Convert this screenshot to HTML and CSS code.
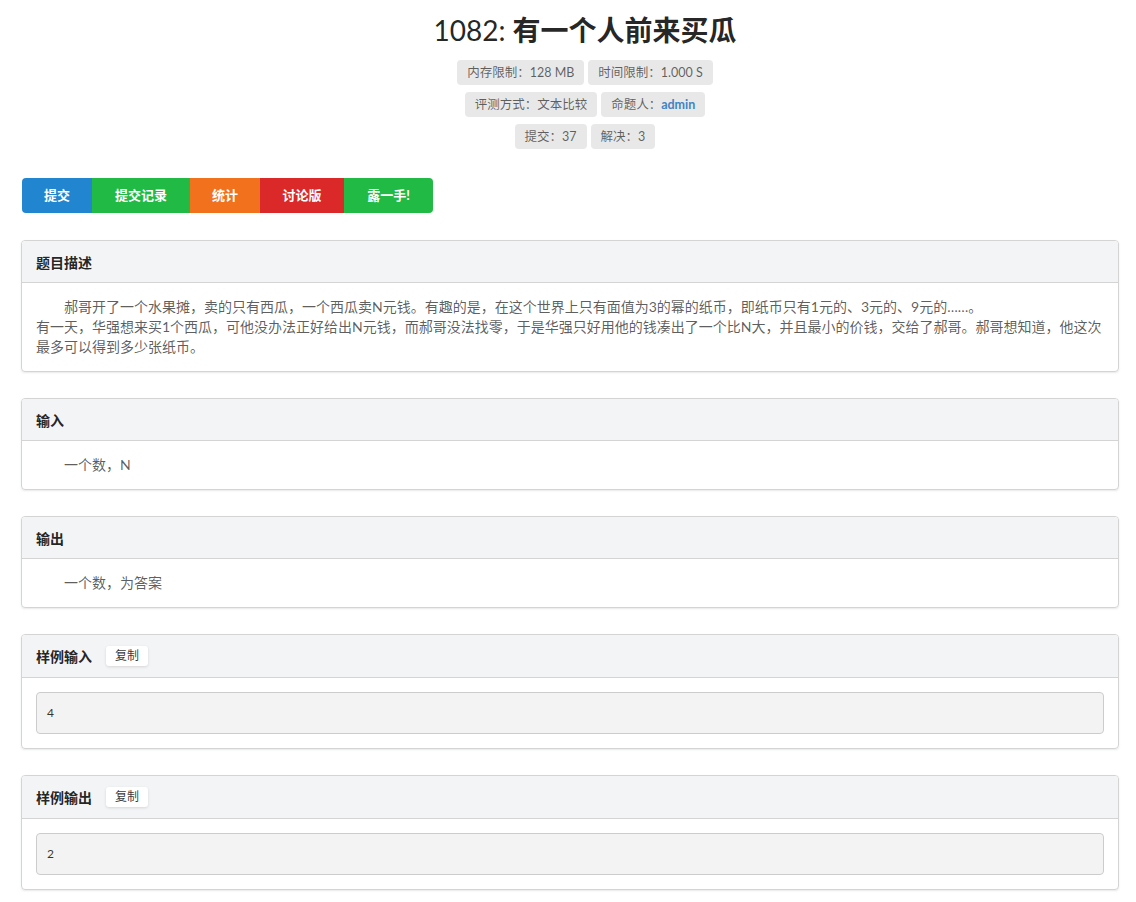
FILE: index.html
```html
<!DOCTYPE html>
<html lang="zh-CN">
<head>
<meta charset="utf-8">
<title>1082: 有一个人前来买瓜</title>
<link rel="stylesheet" href="styles.css">
</head>
<body>
<div class="page">
  <div class="head">
    <h1 class="title"><span class="num">1082: </span>有一个人前来买瓜</h1>
    <div class="labels first">
      <span class="label">内存限制：128 MB</span>
      <span class="label">时间限制：1.000 S</span>
    </div>
    <div class="labels">
      <span class="label">评测方式：文本比较</span>
      <span class="label">命题人：<a class="link" href="#">admin</a></span>
    </div>
    <div class="labels">
      <span class="label">提交：37</span>
      <span class="label">解决：3</span>
    </div>
  </div>

  <div class="buttons">
    <a class="btn blue" href="#">提交</a>
    <a class="btn green w98" href="#">提交记录</a>
    <a class="btn orange" href="#">统计</a>
    <a class="btn red w84" href="#">讨论版</a>
    <a class="btn green w89" href="#">露一手!</a>
  </div>

  <div class="panel">
    <div class="panel-head">题目描述</div>
    <div class="panel-body">
      <p class="indent">郝哥开了一个水果摊，卖的只有西瓜，一个西瓜卖N元钱。有趣的是，在这个世界上只有面值为3的幂的纸币，即纸币只有1元的、3元的、9元的……。</p>
      <p>有一天，华强想来买1个西瓜，可他没办法正好给出N元钱，而郝哥没法找零，于是华强只好用他的钱凑出了一个比N大，并且最小的价钱，交给了郝哥。郝哥想知道，他这次最多可以得到多少张纸币。</p>
    </div>
  </div>

  <div class="panel">
    <div class="panel-head">输入</div>
    <div class="panel-body"><p class="indent">一个数，N</p></div>
  </div>

  <div class="panel">
    <div class="panel-head">输出</div>
    <div class="panel-body"><p class="indent">一个数，为答案</p></div>
  </div>

  <div class="panel">
    <div class="panel-head tall">样例输入<span class="copy">复制</span></div>
    <div class="panel-body"><pre class="sample">4</pre></div>
  </div>

  <div class="panel">
    <div class="panel-head tall">样例输出<span class="copy">复制</span></div>
    <div class="panel-body"><pre class="sample">2</pre></div>
  </div>
</div>
</body>
</html>
```

FILE: styles.css
```css
* { box-sizing: border-box; }
html, body { margin: 0; padding: 0; background: #fff; }
body {
  font-family: Lato, "Noto Sans CJK SC", "Helvetica Neue", Arial, sans-serif;
  font-size: 14px;
  color: rgba(0,0,0,.87);
}
.page {
  padding: 0 17px 20px 21px;
}
.head {
  display: flex;
  flex-direction: column;
  align-items: center;
  padding-left: 30px;
  padding-top: 14px;
}
.title {
  margin: 0;
  font-size: 28px;
  line-height: 32px;
  font-weight: 700;
  color: rgba(0,0,0,.87);
}
.title .num { font-weight: 400; }
.labels {
  display: flex;
  gap: 4px;
  margin-top: 7px;
}
.labels.first { margin-top: 14px; }
.label {
  display: inline-block;
  background: #e8e8e8;
  color: rgba(0,0,0,.6);
  font-size: 12.5px;
  height: 25px;
  line-height: 25px;
  padding: 0 10px;
  border-radius: 4px;
}
.link { color: #4183c4; font-weight: 700; text-decoration: none; }

.buttons {
  display: flex;
  margin: 29px 0 0 1px;
}
.btn {
  display: block;
  width: 70px;
  height: 35px;
  line-height: 35px;
  text-align: center;
  color: #fff;
  font-weight: 700;
  font-size: 13px;
  text-decoration: none;
}
.btn:first-child { border-radius: 4px 0 0 4px; }
.btn:last-child { border-radius: 0 4px 4px 0; }
.w98 { width: 98px; }
.w84 { width: 84px; }
.w89 { width: 89px; }
.blue { background: #2185d0; }
.green { background: #21ba45; }
.orange { background: #f2711c; }
.red { background: #db2828; }

.panel {
  margin-top: 26px;
  border: 1px solid #d4d4d5;
  border-radius: 4px;
  box-shadow: 0 1px 2px 0 rgba(34,36,38,.1);
  overflow: hidden;
}
.buttons + .panel { margin-top: 27px; }
.panel-head {
  background: #f3f4f5;
  border-bottom: 1px solid #d4d4d5;
  height: 42px;
  padding: 0 14px;
  display: flex;
  align-items: center;
  font-weight: 700;
  font-size: 14px;
  color: rgba(0,0,0,.87);
}
.panel-head.tall { height: 43px; }
.copy {
  display: inline-block;
  margin-left: 14px;
  background: #fff;
  color: rgba(0,0,0,.8);
  font-weight: 400;
  font-size: 12px;
  line-height: 14px;
  padding: 3px 9px;
  border-radius: 3px;
  box-shadow: 0 1px 3px rgba(0,0,0,.12);
}
.panel-body {
  padding: 14px 14px;
  color: rgba(0,0,0,.65);
  font-size: 14px;
  line-height: 20px;
}
.panel-body p { margin: 0; }
.indent { text-indent: 2em; }
.sample {
  margin: 0;
  background: #f3f3f3;
  border: 1px solid #ccc;
  border-radius: 4px;
  height: 42px;
  padding: 0 10px;
  line-height: 40px;
  font-family: Lato, "Noto Sans CJK SC", sans-serif;
  font-size: 12px;
  color: rgba(0,0,0,.8);
}
```
